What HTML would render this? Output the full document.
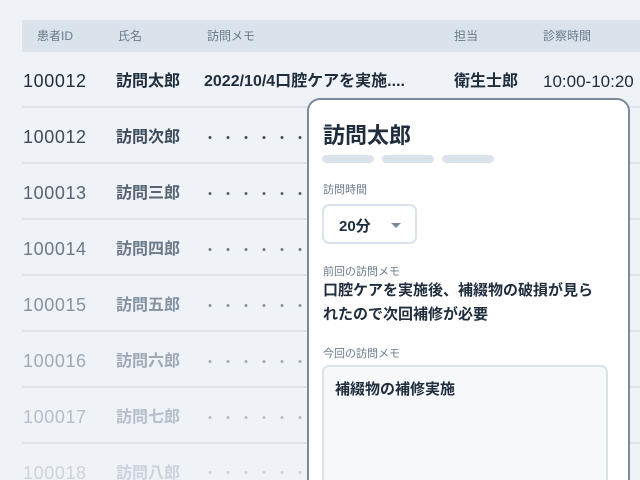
<!DOCTYPE html>
<html style="width:640px;height:480px;overflow:hidden"><head><meta charset="utf-8"><style>
*{margin:0;padding:0;box-sizing:border-box}
body{width:640px;height:480px;overflow:hidden;background:#eff2f6;font-family:"Liberation Sans","Noto Sans CJK JP",sans-serif;position:relative}
.hd{position:absolute;left:22px;top:20px;width:618px;height:32px;background:#dae3ec;font-size:12px;color:#6b7a8a;overflow:hidden}
.hd span,.row span{position:absolute;white-space:nowrap}
.hd span{top:8px;line-height:16px}
.row{position:absolute;left:22px;width:618px;height:56px;border-bottom:2px solid #dbe3eb;font-size:16px;font-weight:bold;overflow:hidden}
.row span{top:19px;line-height:22px}
.c1{left:1px;font-weight:normal;font-size:18px;letter-spacing:0.6px;top:18px!important}
.c2{left:94px}.c3{left:182px}.c4{left:432px}.c5{left:521px;font-weight:normal;font-size:17px}
.dots{letter-spacing:6px;font-size:12px}
.last span{line-height:17px;top:21px}
.last .c1{top:21px!important}
.panel{position:absolute;left:307px;top:98px;width:323px;height:382px;background:#fff;border:2px solid #7b8b9b;border-bottom:none;border-radius:13px 13px 0 0;overflow:hidden}
.lbl{position:absolute;left:14px;font-size:11px;color:#6b7a8a}
.pill{position:absolute;top:55px;width:52px;height:8px;border-radius:4px;background:#dae3ec}
</style></head><body>
<div class="hd"><span style="left:15px">患者ID</span><span style="left:96px">氏名</span><span style="left:185px">訪問メモ</span><span style="left:432px">担当</span><span style="left:521px">診察時間</span></div>
<div class="row" style="top:52px;color:#1f2d3d"><span class="c1">100012</span><span class="c2">訪問太郎</span><span class="c3">2022/10/4口腔ケアを実施....</span><span class="c4">衛生士郎</span><span class="c5">10:00-10:20</span></div>
<div class="row" style="top:108px;color:#3d4b5b"><span class="c1">100012</span><span class="c2">訪問次郎</span><span class="c3 dots">・・・・・・・</span><span class="c5">10:00</span></div>
<div class="row" style="top:164px;color:#566474"><span class="c1">100013</span><span class="c2">訪問三郎</span><span class="c3 dots">・・・・・・・</span><span class="c5">10:00</span></div>
<div class="row" style="top:220px;color:#6c7a89"><span class="c1">100014</span><span class="c2">訪問四郎</span><span class="c3 dots">・・・・・・・</span><span class="c5">10:00</span></div>
<div class="row" style="top:276px;color:#8593a1"><span class="c1">100015</span><span class="c2">訪問五郎</span><span class="c3 dots">・・・・・・・</span><span class="c5">10:00</span></div>
<div class="row" style="top:332px;color:#9eaab6"><span class="c1">100016</span><span class="c2">訪問六郎</span><span class="c3 dots">・・・・・・・</span><span class="c5">10:00</span></div>
<div class="row" style="top:388px;color:#b5bfc9"><span class="c1">100017</span><span class="c2">訪問七郎</span><span class="c3 dots">・・・・・・・</span><span class="c5">10:00</span></div>
<div class="row last" style="top:444px;height:36px;border:none;color:#cbd3db"><span class="c1">100018</span><span class="c2">訪問八郎</span><span class="c3 dots">・・・・・・・</span><span class="c5">10:00</span></div>
<div class="panel">
<div style="position:absolute;left:14px;top:18px;font-size:22px;font-weight:bold;color:#1f2d3d">訪問太郎</div>
<div class="pill" style="left:13px"></div><div class="pill" style="left:73px"></div><div class="pill" style="left:133px"></div>
<div class="lbl" style="top:81px">訪問時間</div>
<div style="position:absolute;left:13px;top:104px;width:95px;height:40px;border:2px solid #dae3ec;border-radius:7px">
<span style="position:absolute;left:15px;top:9px;font-size:15px;font-weight:bold;color:#1f2d3d">20分</span>
<span style="position:absolute;left:67px;top:17px;width:0;height:0;border-left:5px solid transparent;border-right:5px solid transparent;border-top:5px solid #7b8b9b"></span></div>
<div class="lbl" style="top:163px">前回の訪問メモ</div>
<div style="position:absolute;left:14px;top:179px;width:288px;font-size:15px;font-weight:bold;line-height:24px;color:#1f2d3d">口腔ケアを実施後、補綴物の破損が見ら<br>れたので次回補修が必要</div>
<div class="lbl" style="top:245px">今回の訪問メモ</div>
<div style="position:absolute;left:13px;top:265px;width:286px;height:117px;border:2px solid #dae3ec;border-bottom:none;border-radius:7px 7px 0 0;background:#f6f8fa">
<span style="position:absolute;left:11px;top:11px;font-size:15px;font-weight:bold;color:#1f2d3d">補綴物の補修実施</span></div>
</div>
</body></html>
